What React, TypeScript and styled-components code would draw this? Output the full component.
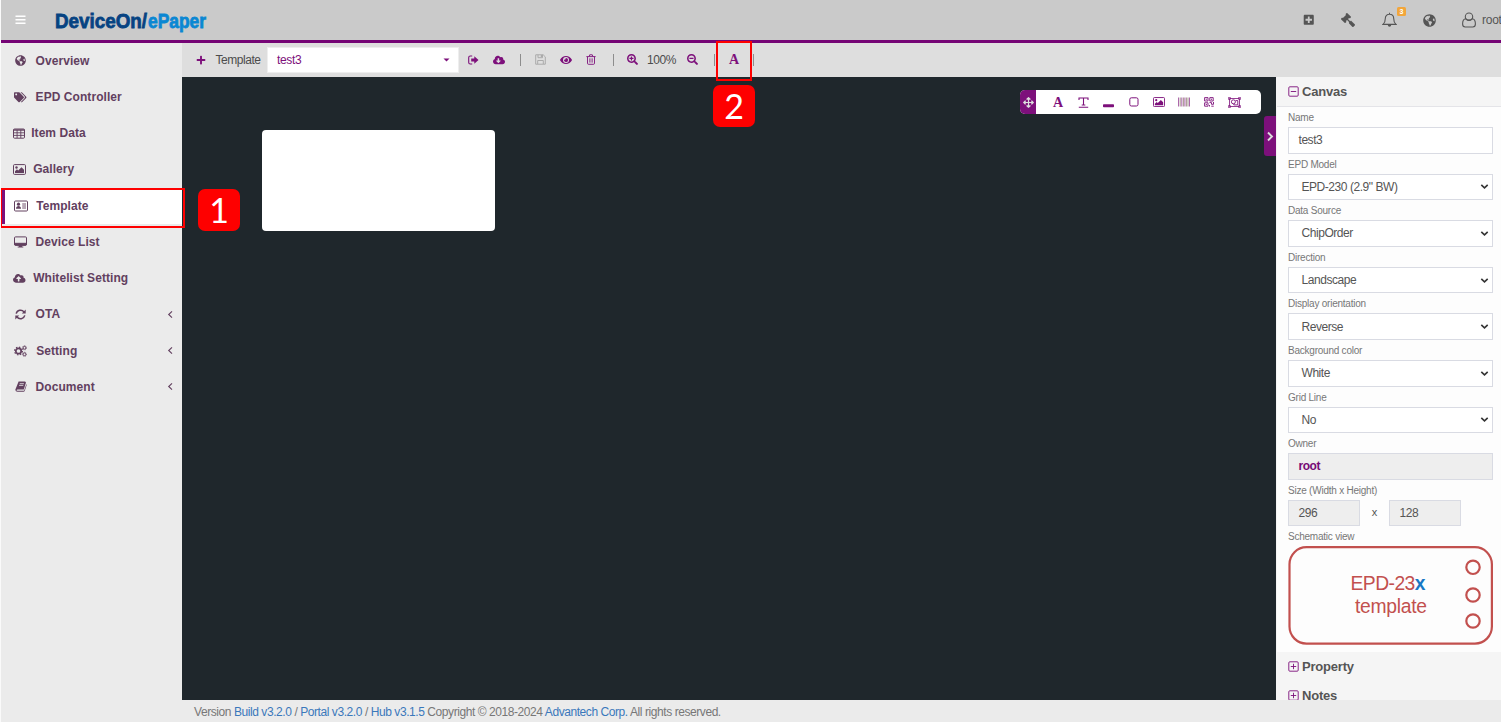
import React from 'react';
import styled, { createGlobalStyle } from 'styled-components';
import {
  FaGlobeAmericas, FaTags, FaCloudUploadAlt, FaCloudDownloadAlt, FaPlusSquare, FaGavel, FaEye,
  FaPlus, FaSearchPlus, FaSearchMinus, FaArrowsAlt,
} from 'react-icons/fa';

const GlobalStyle = createGlobalStyle`
  * { box-sizing: border-box; }
  body { margin: 0; overflow: hidden; font-family: "Liberation Sans", Arial, sans-serif; background: #ebebeb; }
  svg { display: block; flex: none; }
`;

const purple = '#7d107b';

const Page = styled.div`
  width: 1501px; height: 722px; display: flex; flex-direction: column;
  border-left: 1px solid #fafafa; overflow: hidden; position: relative;
`;
const Header = styled.header`
  height: 43px; flex: none; display: flex; align-items: center; background: #cacaca;
  border-bottom: 3px solid #750475; padding-left: 14px; color: #555; white-space: nowrap;
`;
const Logo = styled.svg`margin-left: 29px; overflow: visible;`;
const HeaderTools = styled.div`margin-left: auto; display: flex; align-items: center; height: 40px;`;
const HeaderIcon = styled.div<{ $w: number; $flip?: boolean }>`
  width: ${p => p.$w}px; display: flex; justify-content: center; position: relative;
  transform: ${p => (p.$flip ? 'scaleX(-1)' : 'none')};
`;
const Count = styled.span`
  position: absolute; left: 23px; top: -5px; width: 9px; height: 9px; border-radius: 1.5px;
  background: #f2a63b; color: #fff; font-size: 7px; line-height: 9px; font-weight: 700; text-align: center;
`;
const User = styled.span`font-size: 12px; width: 19px; letter-spacing: -0.25px;`;
const Body = styled.div`flex: 1; display: flex; min-height: 0;`;
const Sidebar = styled.nav`width: 181px; flex: none; background: #ebebeb;`;
const NavItem = styled.div<{ $active?: boolean }>`
  height: 36.25px; display: flex; align-items: center; padding: 0 9px 1px 12px; color: #62405f;
  background: ${p => (p.$active ? '#fff' : 'transparent')};
  box-shadow: ${p => (p.$active ? 'inset 4px 0 #7d107b' : 'none')};
`;
const NavIcon = styled.span<{ $w: number }>`
  width: ${p => p.$w}px; display: flex; flex: none;
`;
const NavLabel = styled.span`font-size: 12px; font-weight: 700; letter-spacing: .06px; flex: 1; white-space: nowrap;`;
const Main = styled.main`flex: 1; display: flex; flex-direction: column; min-width: 0;`;
const Toolbar = styled.div`
  height: 34px; flex: none; background: #dedede; display: flex; align-items: center;
  padding: 0 0 1px 10px; color: ${purple}; font-size: 12px;
`;
const Slot = styled.span<{ $w: number; $muted?: boolean }>`
  width: ${p => p.$w}px; display: flex; justify-content: center; flex: none;
  color: ${p => (p.$muted ? '#aaa' : 'inherit')};
`;
const ToolText = styled.span<{ $w: number }>`
  width: ${p => p.$w}px; flex: none; text-align: center; color: #4c4c4c; white-space: nowrap; letter-spacing: -.45px;
  padding-right: 1px;
`;
const Rule = styled.i`width: 1px; height: 12px; background: #8d8d8d;`;
const Picker = styled.div`
  width: 192px; height: 26px; margin-right: 2px; background: #fff; border: 1px solid #eee; flex: none;
  display: flex; align-items: center; justify-content: space-between; padding: 0 8px 0 9px;
  font-size: 12px; letter-spacing: -.35px;
`;
const Work = styled.div`flex: 1; display: flex; min-height: 0;`;
const Stage = styled.section`flex: 1; background: #1f272c; position: relative;`;
const Sheet = styled.div`
  position: absolute; left: 79.5px; top: 53px; width: 233px; height: 101px; border-radius: 4px; background: #fff;
`;
const Palette = styled.div`
  position: absolute; left: 838px; top: 13px; width: 241px; height: 24px; border-radius: 5px;
  overflow: hidden; background: #fff; display: flex; align-items: center; color: ${purple};
`;
const Grip = styled.div`
  width: 16px; height: 24px; margin-right: 9.5px; background: ${purple}; color: #ddd;
  display: flex; align-items: center; justify-content: center;
`;
const Collapse = styled.div`
  position: absolute; right: 0; top: 39px; width: 12px; height: 40px; border-radius: 3px 0 0 3px;
  background: ${purple}; display: flex; align-items: center; justify-content: center;
`;
const Panel = styled.aside`
  width: 225px; flex: none; background: #fdfdfd; overflow: hidden; border-left: 1px solid #f4f4f4;
`;
const PanelHead = styled.div<{ $line?: boolean }>`
  height: ${p => (p.$line ? 30 : 29)}px; background: #f5f5f5; display: flex; align-items: center; gap: 3px;
  padding: 0 0 1px 11px; font-size: 13px; line-height: 1; font-weight: 700; color: #555; letter-spacing: -.2px;
  border-bottom: ${p => (p.$line ? '1px solid #e4e4e8' : '0')};
`;
const Fields = styled.div`padding: 0 8px 7px 11px;`;
const Label = styled.div`height: 20px; line-height: 21px; font-size: 10px; letter-spacing: -.23px; color: #777;`;
const Control = styled.div<{ $off?: boolean; $select?: boolean; $w?: number }>`
  height: 26.6px; width: ${p => (p.$w ? p.$w + 'px' : '100%')}; border: 1px solid #d9dbe3;
  background: ${p => (p.$off ? '#eee' : '#fff')}; color: #555; font-size: 12px; letter-spacing: -.45px;
  display: flex; align-items: center; justify-content: space-between;
  padding: 0 3px 0 ${p => (p.$select ? 12.5 : 9.5)}px;
`;
const Owner = styled.b`color: #760b76;`;
const SizeRow = styled.div`display: flex; align-items: center;`;
const Times = styled.span`width: 29px; text-align: center; font-size: 11px; color: #555; padding-bottom: 2px;`;
const Footer = styled.footer`
  height: 22px; flex: none; background: #ebebeb; padding-left: 12px; line-height: 25px; font-size: 12px;
  letter-spacing: -.43px; color: #777; white-space: nowrap;
`;
const Anchor = styled.a`color: #3a78bb;`;
const Outline = styled.div<{ $x: number; $y: number; $w: number; $h: number }>`
  position: absolute; left: ${p => p.$x - 1}px; top: ${p => p.$y}px; width: ${p => p.$w}px; height: ${p => p.$h}px;
  border: 2px solid #fe0000;
`;
const Step = styled.div<{ $x: number; $y: number }>`
  position: absolute; left: ${p => p.$x - 1}px; top: ${p => p.$y}px; width: 42px; height: 42px; border-radius: 7px;
  background: #fe0000; color: #fff; font: 34px/41px Lato, sans-serif; text-align: center;
`;

type Box = { w: number; h?: number; vb?: string; children: React.ReactNode };
const Icon = ({ w, h = w, vb, children }: Box) => (
  <svg width={w} height={h} viewBox={vb || `0 0 ${w} ${h}`} fill="none" stroke="currentColor">{children}</svg>
);

const TableIcon = () => (
  <Icon w={12} h={11}><rect x=".5" y="1" width="11" height="9.2" rx="1" /><path d="M.5 2h11" strokeWidth="1.4" /><path d="M1 4.8h10.5M1 7.4h10.5M4.1 2v8M7.8 2v8" strokeWidth=".9" /></Icon>
);
const PictureIcon = ({ w = 13 }: { w?: number }) => (
  <Icon w={w} h={w * 11 / 13} vb="0 0 13 11"><rect x=".5" y=".6" width="12" height="9.8" rx="1" /><circle cx="3.5" cy="3.5" r="1.2" fill="currentColor" stroke="none" /><path d="M2 9V7.3l2-2 1.2 1.2 3.3-3.3L11 5.8V9z" fill="currentColor" stroke="none" /></Icon>
);
const CardIcon = () => (
  <Icon w={14} h={12}><rect x=".5" y="1" width="13" height="10" rx="1" /><circle cx="4.5" cy="4.2" r="1.6" fill="currentColor" stroke="none" /><path d="M2 8.8c0-3.8 5-3.8 5 0z" fill="currentColor" stroke="none" /><path d="M8.2 4H12M8.2 6H12M8.2 8H12" strokeWidth=".9" /></Icon>
);
const MonitorIcon = () => (
  <Icon w={13} h={12}><rect x=".5" y=".9" width="12" height="8.3" rx="1" /><path d="M.5 7.3h12v1.2q0 .7-1 .7H1.5q-1 0-1-.7z" fill="currentColor" /><path d="M5.3 9h2.4l.3 1.5h1.3v1H3.7v-1H5z" fill="currentColor" stroke="none" /></Icon>
);
const RefreshIcon = () => (
  <Icon w={11} h={11}><path d="M1.2 4.6A4.4 4.4 0 0 1 9 3M9.8 6.4A4.4 4.4 0 0 1 2 8" strokeWidth="1.5" /><path d="M10.7.6v3.9H6.8zM.3 10.4V6.5h3.9z" fill="currentColor" stroke="none" /></Icon>
);
const CogsIcon = () => (
  <Icon w={13} h={12}><circle cx="4.5" cy="6" r="2.7" strokeWidth="1.7" /><circle cx="4.5" cy="6" r="3.9" strokeWidth="1.2" strokeDasharray="1.5 1.56" /><circle cx="10.5" cy="2.8" r="1.4" /><circle cx="10.5" cy="2.8" r="2.1" strokeWidth=".7" strokeDasharray=".9 .75" /><circle cx="10.5" cy="9.3" r="1.4" /><circle cx="10.5" cy="9.3" r="2.1" strokeWidth=".7" strokeDasharray=".9 .75" /></Icon>
);
const BookIcon = () => (
  <Icon w={12} h={11}><path d="M3.6.5h6.3q1.3.2 1 1.2L8.8 8.5H2.6q-1 0-1 .7.1.6.9.6h6.6l2.3-6.9q.5.6.2 1.4L9.7 10q-.3.8-1.2.8h-6Q.5 10.8.3 8.8z" fill="currentColor" stroke="none" /><path d="M4.7 2.7h4.2M4.1 4.4h4.2" stroke="#ebebeb" strokeWidth=".8" /></Icon>
);
const LeftIcon = () => <Icon w={6} h={9}><path d="M5 1.3 1.7 4.5 5 7.7" strokeWidth="1.1" /></Icon>;
const BellIcon = () => (
  <Icon w={15} h={16}><path d="M7.5.8v1.2M1 12.4c1.8-1.5 2.3-3.4 2.3-6C3.3 3.7 5 2.2 7.5 2.2s4.2 1.5 4.2 4.2c0 2.6.5 4.5 2.3 6z" strokeWidth="1.1" /><path d="M5.8 13h3.4a1.7 1.7 0 0 1-3.4 0z" fill="currentColor" stroke="none" /></Icon>
);
const UserIcon = () => (
  <Icon w={14} h={16}><circle cx="7" cy="4.7" r="3.7" strokeWidth="1.1" /><path d="M3.9 6.8C1.4 7 .6 9.2.6 12q0 3 2.6 3h7.6q2.6 0 2.6-3c0-2.8-.8-5-3.3-5.2C9 8.6 5 8.6 3.9 6.8z" strokeWidth="1.1" /></Icon>
);
const ExportIcon = () => (
  <Icon w={11} h={10}><path d="M4.2 1H2.3Q.7 1 .7 2.6v4.8Q.7 9 2.3 9h1.9" strokeWidth="1.1" /><path d="M6.3 1.2 10.5 5 6.3 8.8V6.6H3.2V3.4h3.1z" fill="currentColor" stroke="none" /></Icon>
);
const SaveIcon = () => (
  <Icon w={11} h={11}><path d="M.7.8h7.5l2.1 2.1v7.3H.7z" /><path d="M3 .8v2.9h4.5V.8M2.7 10V6.5h5.6V10" /><path d="M5.8 1h1.4v2H5.8z" fill="currentColor" stroke="none" /></Icon>
);
const TrashIcon = () => (
  <Icon w={10} h={11}><path d="M.4 2.6h9.2M3.2 2.4l.5-1.6h2.6l.5 1.6M1.5 2.8v6.5q0 1 1 1h5q1 0 1-1V2.8" strokeWidth=".9" /><path d="M3.6 4.3v4.3M5 4.3v4.3M6.4 4.3v4.3" strokeWidth=".6" /></Icon>
);
const Letter = styled.span`font: 700 14px/14px "Liberation Serif", serif; padding-top: 1px;`;
const TextIcon = () => (
  <Icon w={11} h={11}><path d="M1 3V1h9v2M5.5 1v7M3.7 8h3.6" strokeWidth="1.1" /><path d="M.8 10.3h9.4" strokeWidth="1.1" /></Icon>
);
const LineIcon = () => <Icon w={11} h={11}><rect x="0" y="7.2" width="11" height="3" rx=".8" fill="currentColor" stroke="none" /></Icon>;
const SquareIcon = () => <Icon w={10} h={10}><rect x=".8" y=".8" width="8.2" height="8.2" rx="1.6" /></Icon>;
const BarcodeIcon = () => (
  <Icon w={12} h={10}><path d="M.5.5v9M3.8.5v9M6.9.5v9M11.5.5v9" strokeWidth=".8" opacity=".8" /><path d="M2.2.5v9M5.4.5v9M8.4.5v9M10 .5v9" strokeWidth=".9" stroke="#9d8a83" /></Icon>
);
const QrIcon = () => (
  <Icon w={10} h={10}><path d="M.6.6H4V4H.6zM5.8.6h3.4V4H5.8zM.6 5.8H4v3.4H.6zM5.5 5.6h2v1.7h2V5M5.5 8v1.5M7.3 9.2h2.4" strokeWidth=".9" /><path d="M1.8 1.8h1v1h-1zM7 1.8h1v1H7zM1.8 7h1v1h-1z" fill="currentColor" stroke="none" /></Icon>
);
const GroupIcon = () => (
  <Icon w={13} h={11}><path d="M1.5 1.5h10v8h-10z" strokeWidth=".8" /><path d="M.4.4h2v2h-2zM10.6.4h2v2h-2zM.4 8.6h2v2h-2zM10.6 8.6h2v2h-2z" strokeWidth=".7" /><circle cx="5.4" cy="4.8" r="2" strokeWidth=".9" /><path d="M7.6 3.6h2.2v4.3H5.8V6.9" strokeWidth=".9" /></Icon>
);
const ToggleIcon = ({ plus }: { plus?: boolean }) => (
  <Icon w={11} h={11}><g stroke={purple} strokeWidth=".9"><rect x=".8" y=".8" width="9.4" height="9.4" rx="1" /><path d={plus ? 'M2.8 5.5h5.4M5.5 2.8v5.4' : 'M2.8 5.5h5.4'} /></g></Icon>
);
const DownIcon = () => <Icon w={9} h={7}><path d="m1.3 1.900 3.2 3 3.2-3" stroke="#333" strokeWidth="1.6" /></Icon>;

const nav: { label: string; icon: React.ReactNode; pad: number; w: number; more?: boolean; active?: boolean }[] = [
  { label: 'Overview', icon: <FaGlobeAmericas size={11} />, pad: 2, w: 20.6 },
  { label: 'EPD Controller', icon: <FaTags size={12.5} />, pad: 1, w: 21.6 },
  { label: 'Item Data', icon: <TableIcon />, pad: 0, w: 18.2 },
  { label: 'Gallery', icon: <PictureIcon />, pad: 0, w: 20.2 },
  { label: 'Template', icon: <CardIcon />, pad: .5, w: 22.7, active: true },
  { label: 'Device List', icon: <MonitorIcon />, pad: 1, w: 21.6 },
  { label: 'Whitelist Setting', icon: <FaCloudUploadAlt size={12.5} />, pad: 0, w: 20.2 },
  { label: 'OTA', icon: <RefreshIcon />, pad: 2, w: 20.6, more: true },
  { label: 'Setting', icon: <CogsIcon />, pad: 1, w: 22.2, more: true },
  { label: 'Document', icon: <BookIcon />, pad: 2, w: 20.6, more: true },
];
const NavPad = styled.span<{ $w: number }>`width: ${p => p.$w}px; flex: none;`;

const selects = [
  ['EPD Model', 'EPD-230 (2.9" BW)'],
  ['Data Source', 'ChipOrder'],
  ['Direction', 'Landscape'],
  ['Display orientation', 'Reverse'],
  ['Background color', 'White'],
  ['Grid Line', 'No'],
];

const Schematic = () => (
  <svg width="205" height="99" viewBox="0 0 205 99" fill="none" stroke="#c2504e">
    <rect x="1.5" y="1.2" width="202.4" height="96.4" rx="17" strokeWidth="2.2" />
    <g strokeWidth="2.2"><circle cx="185" cy="21.3" r="6.7" /><circle cx="185" cy="49" r="6.7" /><circle cx="185" cy="75" r="6.7" /></g>
    <g stroke="none" fill="#c2504e" fontSize="19.3" fontFamily="Liberation Sans, Arial, sans-serif">
      <text x="62.5" y="44" textLength="75">EPD-23<tspan fill="#1877c4" fontWeight="700">x</tspan></text>
      <text x="67" y="66.5" textLength="72">template</text>
    </g>
  </svg>
);

export default function App() {
  return (
    <Page>
      <GlobalStyle />
      <Header>
        <Icon w={11} h={10}><path d="M.5 1.3h10M.5 4.8h10M.5 8.3h10" stroke="#fff" strokeWidth="1.6" /></Icon>
        <Logo width="151" height="24">
          <g fontSize="21" fontWeight="700" strokeWidth=".8" fontFamily="Liberation Sans, Arial, sans-serif">
            <text x="0" y="20" textLength="92" lengthAdjust="spacingAndGlyphs" fill="#064382" stroke="#064382">DeviceOn/</text>
            <text x="93" y="20" textLength="58" lengthAdjust="spacingAndGlyphs" fill="#0a87d3" stroke="#0a87d3">ePaper</text>
          </g>
        </Logo>
        <HeaderTools>
          <HeaderIcon $w={26}><FaPlusSquare size={11.5} /></HeaderIcon>
          <HeaderIcon $w={52} $flip><FaGavel size={14} /></HeaderIcon>
          <HeaderIcon $w={30}><BellIcon /><Count>3</Count></HeaderIcon>
          <HeaderIcon $w={51}><FaGlobeAmericas size={13} /></HeaderIcon>
          <HeaderIcon $w={27}><UserIcon /></HeaderIcon>
          <User>root</User>
        </HeaderTools>
      </Header>
      <Body>
        <Sidebar>
          {nav.map(n => (
            <NavItem key={n.label} $active={n.active}>
              <NavPad $w={n.pad} />
              <NavIcon $w={n.w}>{n.icon}</NavIcon>
              <NavLabel>{n.label}</NavLabel>
              {n.more && <LeftIcon />}
            </NavItem>
          ))}
        </Sidebar>
        <Main>
          <Toolbar>
            <Slot $w={18}><FaPlus size={10} /></Slot>
            <ToolText $w={57}>Template</ToolText>
            <Picker>test3<Icon w={7} h={4}><path d="M.5.5h6L3.5 3.5z" fill="currentColor" stroke="none" /></Icon></Picker>
            <Slot $w={25}><ExportIcon /></Slot>
            <Slot $w={26}><FaCloudDownloadAlt size={12} /></Slot>
            <Slot $w={17}><Rule /></Slot>
            <Slot $w={22} $muted><SaveIcon /></Slot>
            <Slot $w={30}><FaEye size={12} /></Slot>
            <Slot $w={20}><TrashIcon /></Slot>
            <Slot $w={24}><Rule /></Slot>
            <Slot $w={15}><FaSearchPlus size={11} /></Slot>
            <ToolText $w={44}>100%</ToolText>
            <Slot $w={16}><FaSearchMinus size={11} /></Slot>
            <Slot $w={29}><Rule /></Slot>
            <Slot $w={10}><Letter>A</Letter></Slot>
            <Slot $w={28}><Rule /></Slot>
          </Toolbar>
          <Work>
            <Stage>
              <Sheet />
              <Palette>
                <Grip><FaArrowsAlt size={11} /></Grip>
                {[<Letter>A</Letter>, <TextIcon />, <LineIcon />, <SquareIcon />, <PictureIcon w={12} />, <BarcodeIcon />, <QrIcon />, <GroupIcon />].map((g, i) => (
                  <Slot key={i} $w={25.2}>{g}</Slot>
                ))}
              </Palette>
              <Collapse><Icon w={8} h={11}><path d="m2 1.5 4 4-4 4" stroke="#ddd" strokeWidth="1.9" /></Icon></Collapse>
            </Stage>
            <Panel>
              <PanelHead $line><ToggleIcon />Canvas</PanelHead>
              <Fields>
                <Label>Name</Label>
                <Control>test3</Control>
                {selects.map(([label, value]) => (
                  <React.Fragment key={label}>
                    <Label>{label}</Label>
                    <Control $select>{value}<DownIcon /></Control>
                  </React.Fragment>
                ))}
                <Label>Owner</Label>
                <Control $off><Owner>root</Owner></Control>
                <Label>Size (Width x Height)</Label>
                <SizeRow>
                  <Control $off $w={72}>296</Control><Times>x</Times><Control $off $w={72}>128</Control>
                </SizeRow>
                <Label>Schematic view</Label>
                <Schematic />
              </Fields>
              <PanelHead><ToggleIcon plus />Property</PanelHead>
              <PanelHead><ToggleIcon plus />Notes</PanelHead>
            </Panel>
          </Work>
          <Footer>
            Version <Anchor>Build v3.2.0</Anchor> / <Anchor>Portal v3.2.0</Anchor> / <Anchor>Hub v3.1.5</Anchor> Copyright © 2018-2024 <Anchor>Advantech Corp.</Anchor> All rights reserved.
          </Footer>
        </Main>
      </Body>
      <Outline $x={0} $y={188} $w={185} $h={40} />
      <Outline $x={716} $y={41} $w={36} $h={40} />
      <Step $x={198} $y={189}>1</Step>
      <Step $x={713} $y={85}>2</Step>
    </Page>
  );
}
